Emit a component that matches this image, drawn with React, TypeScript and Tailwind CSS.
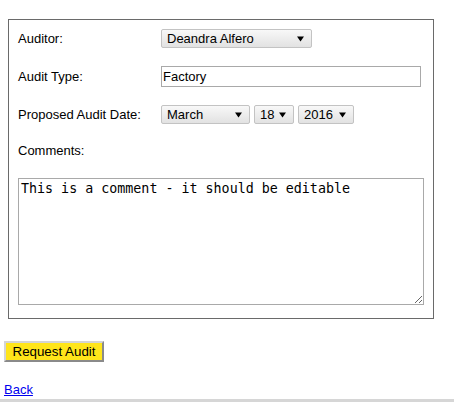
import React from 'react';

function Arrow() {
  return (
    <svg width="7" height="6" viewBox="0 0 7 6" className="shrink-0">
      <path d="M0 0.5 L7 0.5 L3.5 5.5 Z" fill="#000" />
    </svg>
  );
}

function FakeSelect({ value, width }: { value: string; width: string }) {
  return (
    <div
      className={`${width} h-[19px] flex items-center justify-between pl-[5px] pr-[7px] border border-[#c3c3c3] rounded-[2px] bg-gradient-to-b from-[#f8f8f8] to-[#e2e2e2] text-[13px] leading-none`}
    >
      <span>{value}</span>
      <Arrow />
    </div>
  );
}

export default function App() {
  return (
    <div className="h-[402px] bg-white text-black text-[13px] overflow-hidden font-['Liberation_Sans',Arial,sans-serif]">
      <div className="pt-[19px] px-[4px]">
        {/* Form box */}
        <div className="ml-[4px] w-[426px] h-[300px] border border-[#6a6a6a] pl-[9px] pt-[9px]">
          <div className="flex items-center h-[19px]">
            <div className="w-[143px]">Auditor:</div>
            <FakeSelect value="Deandra Alfero" width="w-[151px]" />
          </div>

          <div className="flex items-start h-[21px] mt-[18px]">
            <div className="w-[143px] mt-[1px]">Audit Type:</div>
            <input
              type="text"
              defaultValue="Factory"
              className="w-[260px] h-[21px] border border-[#a9a9a9] px-[1px] text-[13px] outline-none font-['Liberation_Sans',Arial,sans-serif]"
            />
          </div>

          <div className="flex items-center h-[19px] mt-[18px]">
            <div className="w-[143px]">Proposed Audit Date:</div>
            <div className="flex gap-[4px]">
              <FakeSelect value="March" width="w-[89px]" />
              <FakeSelect value="18" width="w-[40px]" />
              <FakeSelect value="2016" width="w-[56px]" />
            </div>
          </div>

          <div className="mt-[19px] leading-[15px]">Comments:</div>

          <textarea
            defaultValue="This is a comment - it should be editable"
            className="block mt-[20px] w-[406px] h-[127px] border border-[#a9a9a9] p-[2px] text-[13.33px] leading-[16px] outline-none font-['DejaVu_Sans_Mono',monospace]"
          />
        </div>

        <button className="mt-[22px] w-[100px] h-[21px] px-0 bg-[#ffe51a] border-2 border-t-[#d4d4d4] border-l-[#d4d4d4] border-r-[#8a8a8a] border-b-[#8a8a8a] text-[13.33px] leading-none text-black">
          Request Audit
        </button>

        <div className="mt-[20px] leading-[15px]">
          <a href="#" className="text-[#0000ee] underline">
            Back
          </a>
        </div>
      </div>
      <div className="mt-[2px] h-[6px] bg-[#d6d6d6]" />
    </div>
  );
}
